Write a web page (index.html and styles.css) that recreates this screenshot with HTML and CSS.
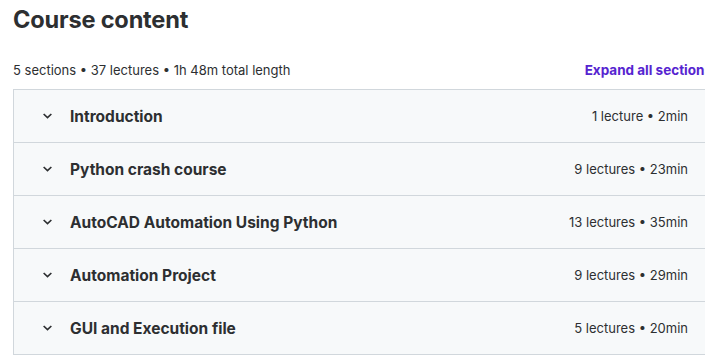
FILE: index.html
```html
<!DOCTYPE html>
<html lang="en">
<head>
    <meta charset="UTF-8">
    <title>Course content</title>
    <link rel="stylesheet" href="styles.css">
</head>
<body>
    <div class="curriculum">
        <h2 class="title">Course content</h2>
        <div class="summary">
            <span>5 sections • 37 lectures • 1h 48m total length</span>
            <button class="expand">Expand all sections</button>
        </div>

        <div class="sections">
            <div class="section">
                <svg class="chevron" viewBox="0 0 12 8"><path d="M1.8 1.8 L6 5.8 L10.2 1.8" /></svg>
                <span class="name">Introduction</span>
                <span class="meta">1 lecture • 2min</span>
            </div>
            <div class="section">
                <svg class="chevron" viewBox="0 0 12 8"><path d="M1.8 1.8 L6 5.8 L10.2 1.8" /></svg>
                <span class="name">Python crash course</span>
                <span class="meta">9 lectures • 23min</span>
            </div>
            <div class="section">
                <svg class="chevron" viewBox="0 0 12 8"><path d="M1.8 1.8 L6 5.8 L10.2 1.8" /></svg>
                <span class="name">AutoCAD Automation Using Python</span>
                <span class="meta">13 lectures • 35min</span>
            </div>
            <div class="section">
                <svg class="chevron" viewBox="0 0 12 8"><path d="M1.8 1.8 L6 5.8 L10.2 1.8" /></svg>
                <span class="name">Automation Project</span>
                <span class="meta">9 lectures • 29min</span>
            </div>
            <div class="section">
                <svg class="chevron" viewBox="0 0 12 8"><path d="M1.8 1.8 L6 5.8 L10.2 1.8" /></svg>
                <span class="name">GUI and Execution file</span>
                <span class="meta">5 lectures • 20min</span>
            </div>
        </div>
    </div>
</body>
</html>
```

FILE: styles.css
```css
html, body {
    margin: 0;
    padding: 0;
    overflow: hidden;
    background: #fff;
}

body {
    font-family: Inter, "Noto Sans", sans-serif;
    color: #2d2f31;
}

.curriculum {
    width: 699px;
    margin-left: 13px;
}

.title {
    font-size: 23.6px;
    font-weight: 700;
    margin: 0;
    padding-top: 5px;
    height: 46px;
    letter-spacing: -0.2px;
}

.summary {
    display: flex;
    justify-content: space-between;
    align-items: center;
    font-size: 13px;
    height: 38px;
    color: #2d2f31;
}

.expand {
    border: none;
    background: none;
    padding: 0;
    font-family: inherit;
    font-size: 13.5px;
    font-weight: 700;
    color: #5624d0;
    cursor: pointer;
}

.sections {
    border: 1px solid #d1d7dc;
    border-right: none;
}

.section {
    display: flex;
    align-items: center;
    height: 52px;
    padding: 0 24px 0 28px;
    background: #f7f9fa;
    border-bottom: 1px solid #d1d7dc;
}

.section:last-child {
    border-bottom: none;
}

.chevron {
    width: 11px;
    height: 8px;
    margin-right: 17px;
    fill: none;
    stroke: #2d2f31;
    stroke-width: 1.8;
}

.name {
    font-size: 15.5px;
    font-weight: 700;
    flex: 1;
}

.meta {
    font-size: 13px;
}
```
